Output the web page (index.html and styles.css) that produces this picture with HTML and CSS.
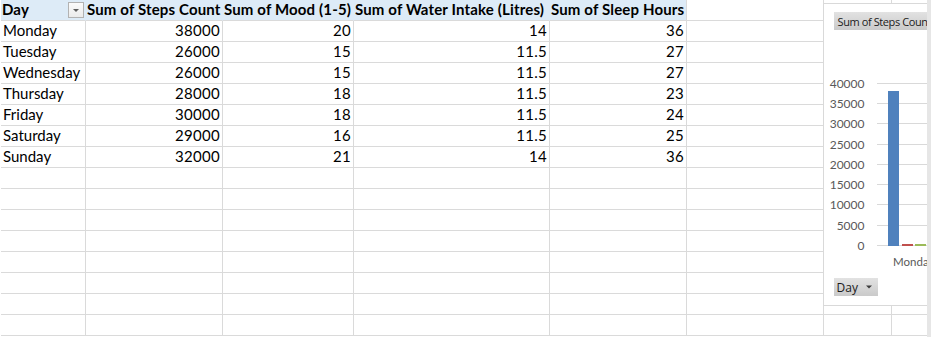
FILE: index.html
```html
<!DOCTYPE html>
<html>
<head>
<meta charset="utf-8">
<link rel="stylesheet" href="styles.css">
</head>
<body>
<div class="sheet">
  <div class="cell hd">Day<span class="filter"><span class="tri"></span></span></div>
  <div class="cell hd">Sum of Steps Count</div>
  <div class="cell hd">Sum of Mood (1-5)</div>
  <div class="cell hd">Sum of Water Intake (Litres)</div>
  <div class="cell hd hd-last">Sum of Sleep Hours</div>
  <div class="cell"></div><div class="cell"></div><div class="cell"></div>

  <div class="cell">Monday</div><div class="cell num">38000</div><div class="cell num">20</div><div class="cell num">14</div><div class="cell num">36</div><div class="cell"></div><div class="cell"></div><div class="cell"></div>
  <div class="cell">Tuesday</div><div class="cell num">26000</div><div class="cell num">15</div><div class="cell num">11.5</div><div class="cell num">27</div><div class="cell"></div><div class="cell"></div><div class="cell"></div>
  <div class="cell">Wednesday</div><div class="cell num">26000</div><div class="cell num">15</div><div class="cell num">11.5</div><div class="cell num">27</div><div class="cell"></div><div class="cell"></div><div class="cell"></div>
  <div class="cell">Thursday</div><div class="cell num">28000</div><div class="cell num">18</div><div class="cell num">11.5</div><div class="cell num">23</div><div class="cell"></div><div class="cell"></div><div class="cell"></div>
  <div class="cell">Friday</div><div class="cell num">30000</div><div class="cell num">18</div><div class="cell num">11.5</div><div class="cell num">24</div><div class="cell"></div><div class="cell"></div><div class="cell"></div>
  <div class="cell">Saturday</div><div class="cell num">29000</div><div class="cell num">16</div><div class="cell num">11.5</div><div class="cell num">25</div><div class="cell"></div><div class="cell"></div><div class="cell"></div>
  <div class="cell">Sunday</div><div class="cell num">32000</div><div class="cell num">21</div><div class="cell num">14</div><div class="cell num">36</div><div class="cell"></div><div class="cell"></div><div class="cell"></div>

  <div class="cell"></div><div class="cell"></div><div class="cell"></div><div class="cell"></div><div class="cell"></div><div class="cell"></div><div class="cell"></div><div class="cell"></div>
  <div class="cell"></div><div class="cell"></div><div class="cell"></div><div class="cell"></div><div class="cell"></div><div class="cell"></div><div class="cell"></div><div class="cell"></div>
  <div class="cell"></div><div class="cell"></div><div class="cell"></div><div class="cell"></div><div class="cell"></div><div class="cell"></div><div class="cell"></div><div class="cell"></div>
  <div class="cell"></div><div class="cell"></div><div class="cell"></div><div class="cell"></div><div class="cell"></div><div class="cell"></div><div class="cell"></div><div class="cell"></div>
  <div class="cell"></div><div class="cell"></div><div class="cell"></div><div class="cell"></div><div class="cell"></div><div class="cell"></div><div class="cell"></div><div class="cell"></div>
  <div class="cell"></div><div class="cell"></div><div class="cell"></div><div class="cell"></div><div class="cell"></div><div class="cell"></div><div class="cell"></div><div class="cell"></div>
  <div class="cell"></div><div class="cell"></div><div class="cell"></div><div class="cell"></div><div class="cell"></div><div class="cell"></div><div class="cell"></div><div class="cell"></div>
  <div class="cell"></div><div class="cell"></div><div class="cell"></div><div class="cell"></div><div class="cell"></div><div class="cell"></div><div class="cell"></div><div class="cell"></div>
</div>

<div class="chart">
  <svg class="chart-svg" width="107" height="301" viewBox="824 4 107 301" xmlns="http://www.w3.org/2000/svg">
    <defs>
      <linearGradient id="btn" x1="0" y1="0" x2="0" y2="1">
        <stop offset="0" stop-color="#e2e2e2"/>
        <stop offset="1" stop-color="#cacaca"/>
      </linearGradient>
    </defs>
    <rect x="834" y="12" width="100" height="18" fill="url(#btn)"/>
    <text class="btn-text" x="837.5" y="25.5">Sum of Steps Count</text>

    <g fill="#d9d9d9">
      <rect x="877" y="83" width="54" height="1"/>
      <rect x="877" y="103" width="54" height="1"/>
      <rect x="877" y="123" width="54" height="1"/>
      <rect x="877" y="144" width="54" height="1"/>
      <rect x="877" y="164" width="54" height="1"/>
      <rect x="877" y="184" width="54" height="1"/>
      <rect x="877" y="204" width="54" height="1"/>
      <rect x="877" y="225" width="54" height="1"/>
      <rect x="877" y="245" width="54" height="1"/>
    </g>
    <g class="axis">
      <text x="864.5" y="88">40000</text>
      <text x="864.5" y="108">35000</text>
      <text x="864.5" y="128">30000</text>
      <text x="864.5" y="148.5">25000</text>
      <text x="864.5" y="168.5">20000</text>
      <text x="864.5" y="188.5">15000</text>
      <text x="864.5" y="208.5">10000</text>
      <text x="864.5" y="229.5">5000</text>
      <text x="864.5" y="249.5">0</text>
    </g>
    <rect x="888" y="91" width="11" height="155" fill="#4f81bd"/>
    <rect x="902" y="244" width="11" height="2" fill="#c0504d"/>
    <rect x="915" y="244" width="11" height="2" fill="#9bbb59"/>
    <text class="xlabel" x="893" y="266">Monday</text>

    <rect x="834" y="278" width="44" height="18" fill="url(#btn)"/>
    <text class="btn-text btn-day" x="836.5" y="291.5">Day</text>
    <path d="M866 285.5 h6 l-3 3 z" fill="#3c3c3c"/>
  </svg>
</div>
<div class="edge"></div>
</body>
</html>
```
FILE: styles.css
```css
html, body {
  margin: 0;
  padding: 0;
  overflow: hidden;
  background: #ffffff;
}

.sheet {
  display: grid;
  grid-template-columns: 85px 137px 131px 196px 137px 137px 68px 1fr;
  grid-auto-rows: 21px;
  border-left: 1px solid #ffffff;
  font-family: Lato, "Noto Sans", sans-serif;
  font-size: 15px;
  color: #000000;
}

.cell {
  box-sizing: border-box;
  border-right: 1px solid #dadada;
  border-bottom: 1px solid #dadada;
  padding: 1px 2px 0 2px;
  line-height: 17px;
  white-space: nowrap;
  overflow: hidden;
}

.num {
  text-align: right;
  letter-spacing: 0.3px;
}

.hd {
  background: #ddebf7;
  border-right-color: #ddebf7;
  font-weight: 700;
  letter-spacing: 0.15px;
  display: flex;
  align-items: flex-start;
  overflow: visible;
  padding-left: 1px;
}

.hd-last {
  border-right-color: #dadada;
}

.filter {
  margin-left: auto;
  margin-top: 1px;
  margin-right: -1px;
  width: 16px;
  height: 16px;
  flex: none;
  box-sizing: border-box;
  border: 1px solid #b2b2b2;
  background: linear-gradient(#fbfbfb, #ebebeb);
  display: flex;
  align-items: center;
  justify-content: center;
}

.tri {
  width: 0;
  height: 0;
  border-left: 3px solid transparent;
  border-right: 3px solid transparent;
  border-top: 3px solid #5f5f5f;
}

.chart {
  position: absolute;
  left: 823px;
  top: 3px;
  width: 108px;
  height: 303px;
  box-sizing: border-box;
  border: 1px solid #d9d9d9;
  border-right: none;
  background: #ffffff;
  overflow: hidden;
}

.chart-svg {
  display: block;
}

.btn-text {
  font-family: "Open Sans", "Noto Sans", sans-serif;
  font-size: 11px;
  letter-spacing: -0.4px;
  fill: #1a1a1a;
}

.btn-day {
  font-size: 12px;
  letter-spacing: 0;
}

.axis text {
  font-family: Lato, sans-serif;
  font-size: 12px;
  fill: #595959;
  text-anchor: end;
}

.xlabel {
  font-family: Lato, sans-serif;
  font-size: 11.5px;
  fill: #595959;
}

.edge {
  position: absolute;
  top: 0;
  right: 0;
  width: 4px;
  height: 100%;
  background: #e6e6e6;
}
```
